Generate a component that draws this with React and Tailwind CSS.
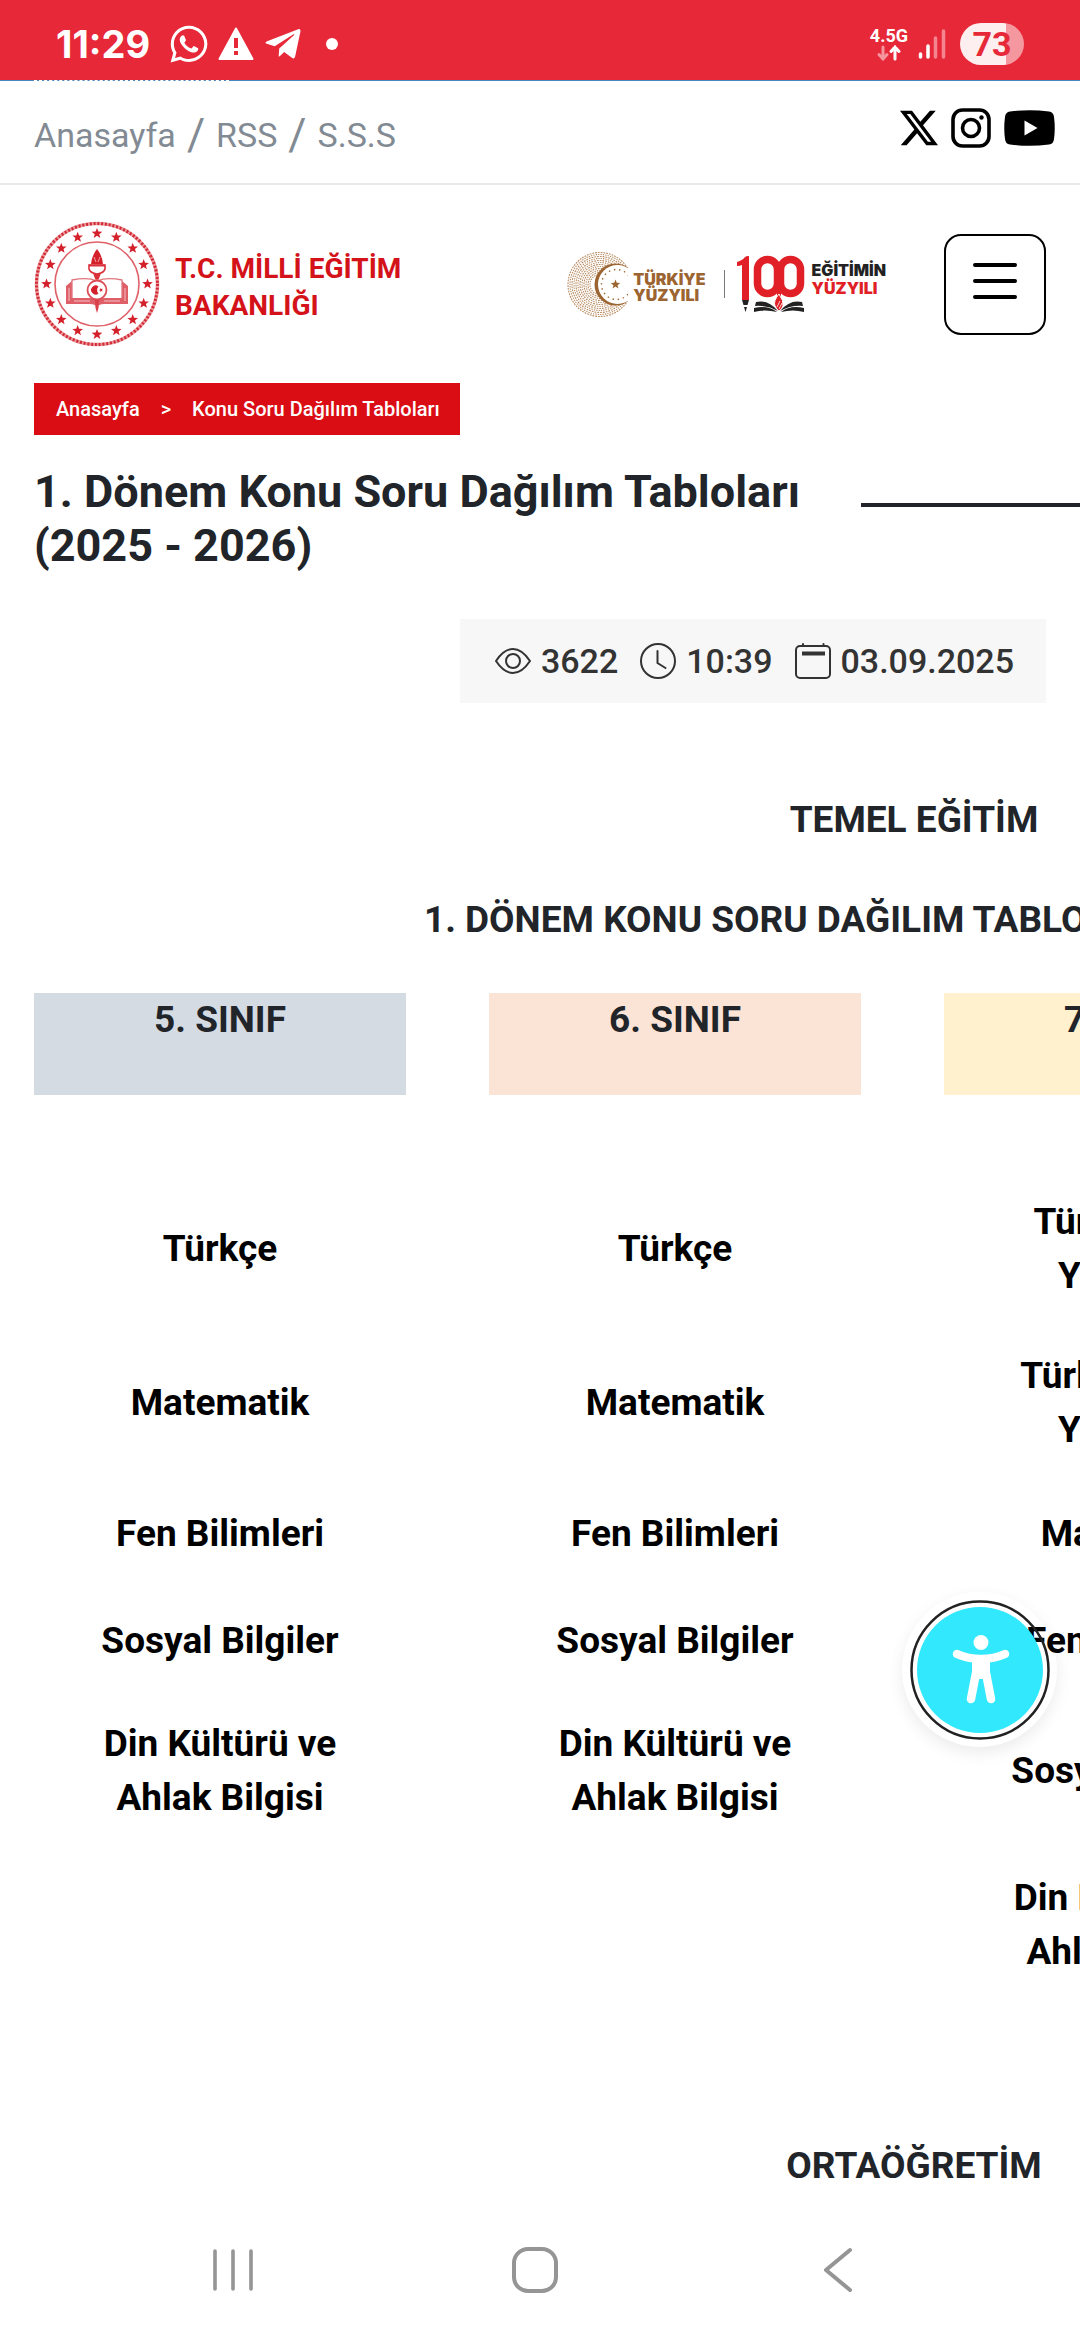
import React from "react";
import { FaWhatsapp, FaTelegramPlane } from "react-icons/fa";
import { BsTwitterX } from "react-icons/bs";

const starPoints = (cx, cy, r, turn = -90) =>
  Array.from({ length: 10 }, (_, i) => {
    const a = ((turn + i * 36) * Math.PI) / 180;
    const rad = i % 2 ? r * 0.42 : r;
    return `${(cx + rad * Math.cos(a)).toFixed(2)},${(cy + rad * Math.sin(a)).toFixed(2)}`;
  }).join(" ");

function StatusBar() {
  return (
    <div className="flex h-20 items-center bg-[#e72838] px-14 pt-2 text-white">
      <span className="font-['Inter',sans-serif] text-[38px] leading-none font-bold">11:29</span>
      <FaWhatsapp className="ml-5 h-[42px] w-[38px]" aria-hidden="true" />
      <svg className="ml-[10px] h-[34px] w-9" viewBox="0 0 36 34" aria-hidden="true">
        <path d="M18 1.500L34.500 32H1.500Z" fill="#fff" stroke="#fff" strokeWidth="2" strokeLinejoin="round" />
        <path d="M16 11h4v10h-4zM16 24h4v4h-4z" fill="#e72838" />
      </svg>
      <FaTelegramPlane className="ml-[10px] h-[40px] w-[38px]" aria-hidden="true" />
      <span className="ml-6 h-3 w-3 rounded-full bg-white" />
      <div className="ml-auto flex items-center">
        <div className="flex flex-col items-center">
          <span className="font-['Roboto',sans-serif] text-lg leading-[18px] font-bold">4.5G</span>
          <svg className="h-4 w-6" viewBox="0 0 24 16" fill="none" strokeWidth="3" strokeLinecap="round" aria-hidden="true">
            <path d="M6 2v12M2 9.500l4 4.500l4-4.500" stroke="#f4959d" />
            <path d="M18 14V2M14 6.500l4-4.500l4 4.500" stroke="#fff" />
          </svg>
        </div>
        <svg className="ml-[10px] h-[30px] w-7" viewBox="0 0 28 30" strokeWidth="3.500" strokeLinecap="round" aria-hidden="true">
          <path d="M2.500 25v3M10 17v11" stroke="#fff" />
          <path d="M17.500 9v19M25.500 2v26" stroke="#f4858e" />
        </svg>
        <span className="ml-[14px] flex h-[42px] w-16 items-center justify-center rounded-full bg-[linear-gradient(90deg,#fdeef0_72%,#f4979f_72%)] font-['Roboto',sans-serif] text-[34px] leading-none font-bold text-[#e72838]">
          73
        </span>
      </div>
    </div>
  );
}

function TopLinks() {
  return (
    <div className="flex h-[104px] items-center justify-between border-b-2 border-[#e5e9e8] pr-[25px] pl-[34px]">
      <nav className="flex items-center gap-[11px] pt-1.5 text-[34px] text-[#828a93]">
        <a href="#anasayfa">Anasayfa</a>
        <span className="text-[44px] leading-none">/</span>
        <a href="#rss">RSS</a>
        <span className="text-[44px] leading-none">/</span>
        <a href="#sss">S.S.S</a>
      </nav>
      <div className="flex items-center gap-[13px] pb-2">
        <a href="#x" aria-label="X">
          <BsTwitterX className="h-[38px] w-[38px] text-black" />
        </a>
        <a href="#instagram" aria-label="Instagram">
          <svg className="h-10 w-10" viewBox="0 0 40 40" fill="none" stroke="#000" strokeWidth="3.600">
            <rect x="2" y="2" width="36" height="36" rx="9.500" />
            <circle cx="20" cy="20" r="8.500" />
            <circle cx="30.500" cy="9.500" r="2.200" fill="#000" stroke="none" />
          </svg>
        </a>
        <a href="#youtube" aria-label="YouTube">
          <svg className="h-9 w-[51px]" viewBox="0 0 51 36">
            <path d="M6 1.500Q25.500-1 45 1.500Q49.500 2 50 7Q51.500 18 50 29Q49.500 34 45 34.500Q25.500 37 6 34.500Q1.500 34 1 29Q-.5 18 1 7Q1.500 2 6 1.500Z" fill="#000" />
            <path d="M20.500 10.500v15L33.500 18Z" fill="#fff" />
          </svg>
        </a>
      </div>
    </div>
  );
}

function Seal() {
  return (
    <svg className="h-[126px] w-[126px]" viewBox="0 0 126 126" fill="none" stroke="#d9303a" role="img" aria-label="Milli Eğitim Bakanlığı">
      <circle cx="63" cy="63" r="60.500" strokeWidth="3.500" stroke="#eb979c" />
      <circle cx="63" cy="63" r="60.500" strokeWidth="3" strokeDasharray="2 1.800" stroke="#d22b35" />
      <circle cx="63" cy="63" r="42" strokeWidth="1.600" stroke="#df6068" />
      {Array.from({ length: 16 }, (_, i) => {
        const a = (i * Math.PI) / 8;
        return (
          <polygon key={i} points={starPoints(63 + 50.500 * Math.cos(a), 63 + 50.500 * Math.sin(a), 5.600)} fill="#d4202b" stroke="none" />
        );
      })}
      <path d="M38 60L32 65V83H56Q61 83 63 86Q65 83 70 83H94V65L88 60V77H70Q65 77 63 80Q61 77 56 77H38Z" fill="#df5f68" stroke="none" />
      <path d="M38 77V59Q54 56 63 60Q72 56 88 59V77" strokeWidth="1.300" stroke="#e0767d" />
      <path d="M35 67v13M91 67v13M40 80h16M70 80h16" strokeWidth="1" stroke="#f3bfc3" />
      <path d="M63 28Q58 34 57 43H69Q68 34 63 28Z" fill="#d4202b" stroke="none" />
      <path d="M60 36l2 5M66 36l-2 5" stroke="#f0a0a5" strokeWidth="1" />
      <path d="M55 44H71V48Q70 52 63 53Q56 52 55 48Z" fill="#fff" strokeWidth="1.600" />
      <path d="M55 44.500h16" strokeWidth="2" />
      <path d="M60 53l2 5h2l2-5" strokeWidth="1.500" fill="#d9303a" />
      <circle cx="63" cy="69" r="9.500" fill="#fff" strokeWidth="1.800" stroke="#dc4d56" />
      <path d="M64.500 65.500a4.500 4.500 0 1 0 0 7a5 5 0 0 1 0-7Z" fill="#d4202b" stroke="none" />
      <polygon points={starPoints(67, 69, 2.200, 180)} fill="#d4202b" stroke="none" />
      <path d="M61 79h4l-.5 8L63 92l-1.500-5Z" fill="#d9404a" stroke="none" />
    </svg>
  );
}

function CenturyEmblem() {
  return (
    <svg className="h-[67px] w-[64px]" viewBox="0 0 64 67" fill="none" aria-hidden="true">
      <g stroke="#b98b60">
        {Array.from({ length: 12 }, (_, i) => (
          <circle key={i} cx="33" cy="33.500" r={10 + i * 2} strokeWidth="1.100" strokeDasharray={i % 2 ? "1.800 1" : "1.300 1.100"} />
        ))}
      </g>
      <path d="M60 15L64 12V56L60 53Z" fill="#fff" />
      <circle cx="48.500" cy="33.500" r="21" fill="#9c6430" />
      <circle cx="50.500" cy="33.500" r="19.500" fill="#fff" />
      <path d="M61 13h3v42h-3Z" fill="#fff" />
      <circle cx="49.500" cy="33.500" r="15" stroke="#9c6430" strokeWidth="1.400" strokeDasharray="1.400 3.800" />
      <path d="M61 20h4v27h-4Z" fill="#fff" />
      <polygon points={starPoints(48.500, 33.500, 5)} fill="#9c6430" />
    </svg>
  );
}

function HundredLogo() {
  return (
    <svg className="h-[58px] w-[68px]" viewBox="0 0 68 58" fill="none" role="img" aria-label="100">
      <path d="M0 7Q6 5 8 2Q9 1 12 1V45H5V10Q3 11 0 11Z" fill="#e01f26" />
      <path d="M5 45h7l-1.500 5h-4Z" fill="#222" />
      <path d="M7 52h3l-1.500 5Z" fill="#222" />
      <rect x="20.500" y="4.500" width="20" height="34" rx="10" stroke="#e01f26" strokeWidth="7.500" />
      <rect x="43.500" y="4.500" width="20" height="34" rx="10" stroke="#e01f26" strokeWidth="7.500" />
      <path d="M40 36v6h4v-6Z" fill="#e01f26" />
      <path d="M19 47Q31 44 41 56Q30 50 18 51Z M17 53Q31 50 40 57Q28 54 17 57Z" fill="#222" />
      <path d="M65 47Q53 44 43 56Q54 50 66 51Z M67 53Q53 50 44 57Q56 54 67 57Z" fill="#222" />
      <path d="M42 39Q36 46 38 51Q40 55 42 56Q45 54 46 51Q47 46 42 39Z" fill="#e01f26" stroke="#fff" />
      <path d="M40 52l3-6M42 54l3-6" stroke="#fff" strokeWidth=".8" />
    </svg>
  );
}

function SiteHeader() {
  return (
    <header className="flex items-center pt-9 pr-[34px] pl-[34px]">
      <Seal />
      <p className="mt-1.5 ml-[15px] text-[28px] leading-[37px] font-bold text-[#d41219]">
        T.C. MİLLİ EĞİTİM
        <br />
        BAKANLIĞI
      </p>
      <div className="ml-auto flex items-center font-['Inter',sans-serif] text-base leading-4 font-black">
        <CenturyEmblem />
        <p className="mt-1.5 ml-0.5 text-[#9c6430]">
          TÜRKİYE
          <br />
          YÜZYILI
        </p>
        <span className="ml-[18px] h-7 w-px bg-[#777]" />
        <div className="ml-3 flex items-center">
          <HundredLogo />
          <p className="mb-2.5 ml-[7px] leading-[18px]">
            <span className="text-[#222]">EĞİTİMİN</span>
            <br />
            <span className="text-[#e01f26]">YÜZYILI</span>
          </p>
        </div>
      </div>
      <button type="button" aria-label="Menü" className="ml-[58px] flex h-[101px] w-[102px] flex-col items-center justify-center gap-3 rounded-[17px] border-2 border-black pb-1.5">
        <span className="h-1 w-11 rounded-full bg-black" />
        <span className="h-1 w-11 rounded-full bg-black" />
        <span className="h-1 w-11 rounded-full bg-black" />
      </button>
    </header>
  );
}

function InfoBox() {
  return (
    <div className="mt-[46px] mr-[34px] ml-auto flex h-[84px] w-fit items-center gap-[22px] bg-[#f7f7f7] pr-8 pl-[35px] text-[34px] font-medium text-[#333]">
      <span className="flex items-center gap-[10px]">
        <svg className="h-9 w-9" viewBox="0 0 36 36" fill="none" stroke="#333" strokeWidth="2" aria-hidden="true">
          <path d="M1 18Q9 6 18 6T35 18Q27 30 18 30T1 18Z" strokeLinejoin="round" />
          <circle cx="18" cy="18" r="7" />
        </svg>
        3622
      </span>
      <span className="flex items-center gap-[10px]">
        <svg className="h-9 w-9" viewBox="0 0 36 36" fill="none" stroke="#333" strokeWidth="2" strokeLinecap="round" aria-hidden="true">
          <circle cx="18" cy="18" r="17" />
          <path d="M17.500 8v12l8 5" />
        </svg>
        10:39
      </span>
      <span className="flex items-center gap-[10px]">
        <svg className="h-9 w-9" viewBox="0 0 36 36" fill="none" stroke="#333" strokeWidth="2" strokeLinecap="round" aria-hidden="true">
          <rect x="1" y="3" width="34" height="32" rx="4" />
          <path d="M8 1v2M28.500 1v2" />
          <path d="M7 10.500h23" strokeWidth="4" strokeLinecap="butt" />
        </svg>
        03.09.2025
      </span>
    </div>
  );
}

const gradeColors = ["bg-[#d5dbe3]", "bg-[#fbe3d6]", "bg-[#fff1cd]"];

function Grades() {
  return (
    <table className="mt-[46px] w-[1282px] table-fixed border-collapse text-center text-[37px] leading-[54px] font-bold text-black">
      <colgroup>
        <col className="w-[372px]" />
        <col className="w-[83px]" />
        <col className="w-[372px]" />
        <col className="w-[83px]" />
        <col className="w-[372px]" />
      </colgroup>
      <thead className="text-[#212529]">
        <tr className="h-[102px] align-top">
          {["5. SINIF", "6. SINIF", "7. SINIF"].map((g, i) => (
            <React.Fragment key={g}>
              {i > 0 && <td />}
              <th scope="col" className={gradeColors[i]}>{g}</th>
            </React.Fragment>
          ))}
        </tr>
      </thead>
      <tbody>
        <tr className="h-[77px]">
          <td colSpan={5} />
        </tr>
        {[
          ["Türkçe", "Türkçe", "Türkçe Eski|Yayınları"],
          ["Matematik", "Matematik", "Türkçe Genel|Yayınları"],
          ["Fen Bilimleri", "Fen Bilimleri", "Matematik"],
          ["Sosyal Bilgiler", "Sosyal Bilgiler", "Fen Bilimleri"],
          ["Din Kültürü ve|Ahlak Bilgisi", "Din Kültürü ve|Ahlak Bilgisi", "Sosyal Bilgiler"],
          ["", "", "Din Kültürü ve|Ahlak Bilgisi"],
        ].map((row, r) => (
          <tr key={r} className={row.some((c) => c.includes("|")) ? "h-[154px]" : "h-[107px]"}>
            {row.map((cell, c) => (
              <React.Fragment key={c}>
                {c > 0 && <td />}
                <td className="align-middle">
                  {cell && (
                    <a href="#tablo" className="inline-block">
                      {cell.split("|").map((line) => (
                        <span key={line} className="block">{line}</span>
                      ))}
                    </a>
                  )}
                </td>
              </React.Fragment>
            ))}
          </tr>
        ))}
      </tbody>
    </table>
  );
}

function SystemNav() {
  return (
    <nav aria-label="Sistem" className="mt-auto flex h-[140px] items-center justify-between bg-white pr-[220px] pl-[210px]">
      <button type="button" aria-label="Son uygulamalar">
        <svg className="h-12 w-12" viewBox="0 0 48 48" fill="none" stroke="#959595" strokeWidth="3.600" strokeLinecap="round">
          <path d="M5 5v38M23 5v38M41 5v38" />
        </svg>
      </button>
      <button type="button" aria-label="Ana ekran">
        <svg className="h-12 w-12" viewBox="0 0 48 48" fill="none" stroke="#959595" strokeWidth="4">
          <rect x="3" y="3" width="42" height="42" rx="14" />
        </svg>
      </button>
      <button type="button" aria-label="Geri">
        <svg className="h-12 w-12" viewBox="0 0 48 48" fill="none" stroke="#959595" strokeWidth="4" strokeLinecap="round" strokeLinejoin="round">
          <path d="M38 4L14 24l24 20" />
        </svg>
      </button>
    </nav>
  );
}

export default function App() {
  return (
    <div className="relative flex min-h-screen flex-col overflow-hidden bg-white font-['Roboto',sans-serif] text-[#212529]">
      <StatusBar />
      <div className="flex h-px bg-[#4a86c0] pl-[34px]">
        <span className="w-[195px] border-t border-dashed border-white" />
      </div>
      <TopLinks />
      <SiteHeader />
      <nav aria-label="Konum" className="mt-9 ml-[34px] flex h-[52px] w-fit items-center gap-[21px] bg-[#db0d14] pr-5 pl-[22px] text-[20px] font-medium text-white">
        <a href="#anasayfa">Anasayfa</a>
        <span>&gt;</span>
        <a href="#tablolar">Konu Soru Dağılım Tabloları</a>
      </nav>
      <div className="mt-[30px] flex items-start pl-[34px]">
        <h1 className="w-[827px] text-[45px] leading-[54px] font-bold">
          1. Dönem Konu Soru Dağılım Tabloları
          <br />
          (2025 - 2026)
        </h1>
        <span className="mt-[38px] h-1 flex-1 bg-[#212529]" />
      </div>
      <InfoBox />
      <main className="ml-[34px] w-[1760px]">
        <h2 className="mt-[90px] text-center text-[37px] leading-[54px] font-bold">TEMEL EĞİTİM</h2>
        <h2 className="mt-[46px] text-center text-[37px] leading-[54px] font-bold">1. DÖNEM KONU SORU DAĞILIM TABLOLARI (2025 - 2026)</h2>
        <Grades />
        <h2 className="mt-[137px] text-center text-[37px] leading-[54px] font-bold">ORTAÖĞRETİM</h2>
      </main>
      <SystemNav />
      <button type="button" aria-label="Erişilebilirlik" className="fixed right-[23px] bottom-[593px] flex h-[155px] w-[155px] items-center justify-center rounded-full shadow-[0_6px_16px_rgba(0,0,0,0.08)]">
        <svg className="h-[140px] w-[140px]" viewBox="0 0 140 140">
          <circle cx="70" cy="70" r="68.500" fill="none" stroke="#222" strokeWidth="2.500" />
          <circle cx="70" cy="70" r="63" fill="#31e8fd" />
          <circle cx="71" cy="42.500" r="7.500" fill="#fff" />
          <path d="M47 54q11 5 24 5t24-5M66 73l-5 26M76 73l5 26" fill="none" stroke="#fff" strokeWidth="8.500" strokeLinecap="round" />
          <path d="M62 58h18v18l-6 3h-6l-6-3Z" fill="#fff" />
        </svg>
      </button>
    </div>
  );
}
